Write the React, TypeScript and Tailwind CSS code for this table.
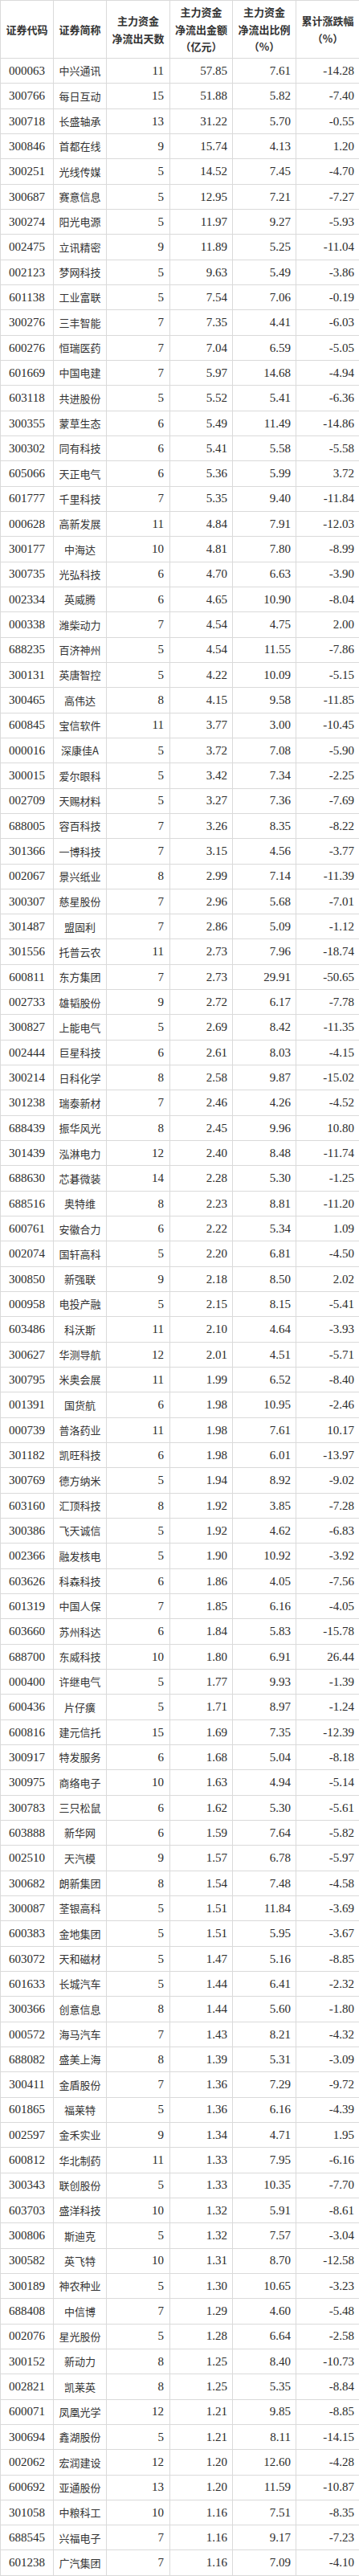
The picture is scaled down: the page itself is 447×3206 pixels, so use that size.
import React from 'react';

const raw = `000063 中兴通讯 11 57.85 7.61 -14.28
300766 每日互动 15 51.88 5.82 -7.40
300718 长盛轴承 13 31.22 5.70 -0.55
300846 首都在线 9 15.74 4.13 1.20
300251 光线传媒 5 14.52 7.45 -4.70
300687 赛意信息 5 12.95 7.21 -7.27
300274 阳光电源 5 11.97 9.27 -5.93
002475 立讯精密 9 11.89 5.25 -11.04
002123 梦网科技 5 9.63 5.49 -3.86
601138 工业富联 5 7.54 7.06 -0.19
300276 三丰智能 7 7.35 4.41 -6.03
600276 恒瑞医药 7 7.04 6.59 -5.05
601669 中国电建 7 5.97 14.68 -4.94
603118 共进股份 5 5.52 5.41 -6.36
300355 蒙草生态 6 5.49 11.49 -14.86
300302 同有科技 6 5.41 5.58 -5.58
605066 天正电气 6 5.36 5.99 3.72
601777 千里科技 7 5.35 9.40 -11.84
000628 高新发展 11 4.84 7.91 -12.03
300177 中海达 10 4.81 7.80 -8.99
300735 光弘科技 6 4.70 6.63 -3.90
002334 英威腾 6 4.65 10.90 -8.04
000338 潍柴动力 7 4.54 4.75 2.00
688235 百济神州 5 4.54 11.55 -7.86
300131 英唐智控 5 4.22 10.09 -5.15
300465 高伟达 8 4.15 9.58 -11.85
600845 宝信软件 11 3.77 3.00 -10.45
000016 深康佳A 5 3.72 7.08 -5.90
300015 爱尔眼科 5 3.42 7.34 -2.25
002709 天赐材料 5 3.27 7.36 -7.69
688005 容百科技 7 3.26 8.35 -8.22
301366 一博科技 7 3.15 4.56 -3.77
002067 景兴纸业 8 2.99 7.14 -11.39
300307 慈星股份 7 2.96 5.68 -7.01
301487 盟固利 7 2.86 5.09 -1.12
301556 托普云农 11 2.73 7.96 -18.74
600811 东方集团 7 2.73 29.91 -50.65
002733 雄韬股份 9 2.72 6.17 -7.78
300827 上能电气 5 2.69 8.42 -11.35
002444 巨星科技 6 2.61 8.03 -4.15
300214 日科化学 8 2.58 9.87 -15.02
301238 瑞泰新材 7 2.46 4.26 -4.52
688439 振华风光 8 2.45 9.96 10.80
301439 泓淋电力 12 2.40 8.48 -11.74
688630 芯碁微装 14 2.28 5.30 -1.25
688516 奥特维 8 2.23 8.81 -11.20
600761 安徽合力 6 2.22 5.34 1.09
002074 国轩高科 5 2.20 6.81 -4.50
300850 新强联 9 2.18 8.50 2.02
000958 电投产融 5 2.15 8.15 -5.41
603486 科沃斯 11 2.10 4.64 -3.93
300627 华测导航 12 2.01 4.51 -5.71
300795 米奥会展 11 1.99 6.52 -8.40
001391 国货航 6 1.98 10.95 -2.46
000739 普洛药业 11 1.98 7.61 10.17
301182 凯旺科技 6 1.98 6.01 -13.97
300769 德方纳米 5 1.94 8.92 -9.02
603160 汇顶科技 8 1.92 3.85 -7.28
300386 飞天诚信 5 1.92 4.62 -6.83
002366 融发核电 5 1.90 10.92 -3.92
603626 科森科技 6 1.86 4.05 -7.56
601319 中国人保 7 1.85 6.16 -4.05
603660 苏州科达 6 1.84 5.83 -15.78
688700 东威科技 10 1.80 6.91 26.44
000400 许继电气 5 1.77 9.93 -1.39
600436 片仔癀 5 1.71 8.97 -1.24
600816 建元信托 15 1.69 7.35 -12.39
300917 特发服务 6 1.68 5.04 -8.18
300975 商络电子 10 1.63 4.94 -5.14
300783 三只松鼠 6 1.62 5.30 -5.61
603888 新华网 6 1.59 7.64 -5.82
002510 天汽模 9 1.57 6.78 -5.97
300682 朗新集团 8 1.54 7.48 -4.58
300087 荃银高科 5 1.51 11.84 -3.69
600383 金地集团 5 1.51 5.95 -3.67
603072 天和磁材 5 1.47 5.16 -8.85
601633 长城汽车 5 1.44 6.41 -2.32
300366 创意信息 8 1.44 5.60 -1.80
000572 海马汽车 7 1.43 8.21 -4.32
688082 盛美上海 8 1.39 5.31 -3.09
300411 金盾股份 7 1.36 7.29 -9.72
601865 福莱特 5 1.36 6.16 -4.39
002597 金禾实业 9 1.34 4.71 1.95
600812 华北制药 11 1.33 7.95 -6.16
300343 联创股份 5 1.33 10.35 -7.70
603703 盛洋科技 10 1.32 5.91 -8.61
300806 斯迪克 5 1.32 7.57 -3.04
300582 英飞特 10 1.31 8.70 -12.58
300189 神农种业 5 1.30 10.65 -3.23
688408 中信博 7 1.29 4.60 -5.48
002076 星光股份 5 1.28 6.64 -2.58
300152 新动力 8 1.25 8.40 -10.73
002821 凯莱英 8 1.25 5.35 -8.84
600071 凤凰光学 12 1.21 9.85 -8.85
300694 鑫湖股份 5 1.21 8.11 -14.15
002062 宏润建设 12 1.20 12.60 -4.28
600692 亚通股份 13 1.20 11.59 -10.87
301058 中粮科工 10 1.16 7.51 -8.35
688545 兴福电子 7 1.16 9.17 -7.23
601238 广汽集团 7 1.16 7.09 -4.10`;

const rows = raw.split('\n').map((line) => line.trim().split(' '));

const headers = [
  ['证券代码'],
  ['证券简称'],
  ['主力资金', '净流出天数'],
  ['主力资金', '净流出金额', '（亿元）'],
  ['主力资金', '净流出比例', '（%）'],
  ['累计涨跌幅', '（%）'],
];

const cell = 'border-r border-b border-[#dadada] flex items-center h-[31.33px]';

export default function App() {
  return (
    <div className="w-[447px] bg-white text-[#2b2b2b] font-['Liberation_Serif','Noto_Sans_CJK_SC',serif]">
      <div className="grid grid-cols-[66px_66px_79px_78px_79px_79px] border-t border-l border-[#dadada]">
        {headers.map((lines, i) => (
          <div
            key={i}
            className="h-[72px] border-r border-b border-[#dadada] flex flex-col items-center justify-center text-[13px] leading-[21.5px] font-bold text-[#333] font-['Noto_Sans_CJK_SC',sans-serif]"
          >
            {lines.map((l) => (
              <span key={l}>{l}</span>
            ))}
          </div>
        ))}
        {rows.map((r) => (
          <React.Fragment key={r[0]}>
            <div className={`${cell} justify-center text-[15px]`}>{r[0]}</div>
            <div className={`${cell} justify-center text-[13px] text-[#333] font-['Noto_Sans_CJK_SC',sans-serif]`}>{r[1]}</div>
            <div className={`${cell} justify-end pr-[7px] text-[15px]`}>{r[2]}</div>
            <div className={`${cell} justify-end pr-[6px] text-[15px]`}>{r[3]}</div>
            <div className={`${cell} justify-end pr-[6px] text-[15px]`}>{r[4]}</div>
            <div className={`${cell} justify-end pr-[6px] text-[15px]`}>{r[5]}</div>
          </React.Fragment>
        ))}
      </div>
    </div>
  );
}
